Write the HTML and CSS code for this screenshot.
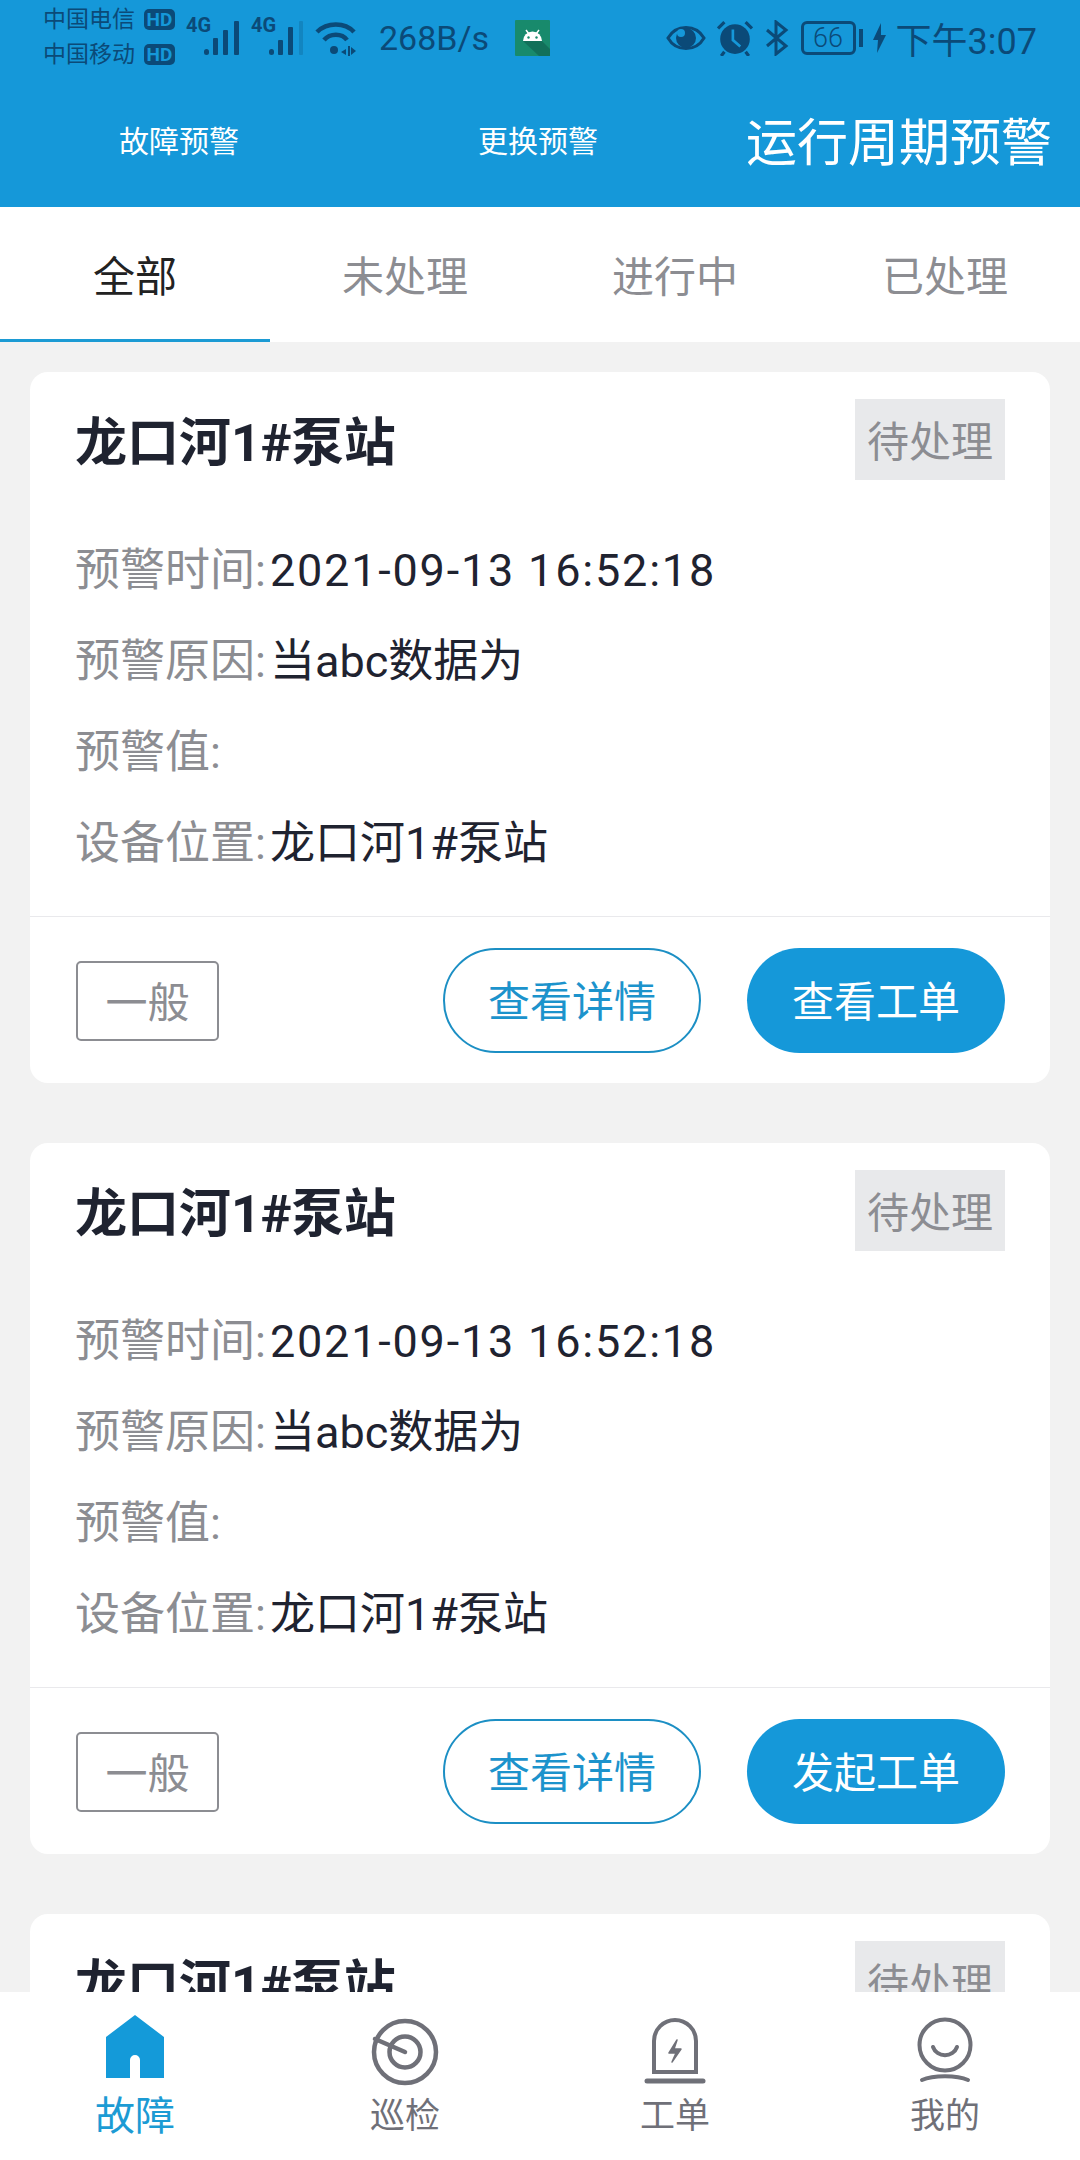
FILE: index.html
```html
<!DOCTYPE html>
<html lang="zh-CN">
<head>
    <meta charset="UTF-8">
    <meta name="viewport" content="width=device-width, initial-scale=1.0">
    <title>运行周期预警</title>
    <link rel="stylesheet" href="styles.css">
</head>
<body>
<div class="app">
    <div class="kop">
        <div class="status">
            <div class="carriers">
                <div class="carrier">中国电信<span class="hd">HD</span></div>
                <div class="carrier">中国移动<span class="hd">HD</span></div>
            </div>
            <span class="net net1">4G</span>
            <svg class="signal" width="36" height="34" viewBox="0 0 36 34">
                <rect x="0" y="28" width="5" height="6" rx="2.5"/>
                <rect x="9" y="17" width="5" height="17" rx="1"/>
                <rect x="19" y="9" width="5" height="25" rx="1"/>
                <rect x="30" y="0" width="5" height="34" rx="1"/>
            </svg>
            <span class="net net2">4G</span>
            <svg class="signal" width="36" height="34" viewBox="0 0 36 34">
                <rect x="0" y="28" width="5" height="6" rx="2.5"/>
                <rect x="9" y="19" width="5" height="15" rx="1"/>
                <rect x="19" y="6" width="5" height="28" rx="1"/>
                <rect x="30" y="0" width="4" height="34" rx="1" opacity=".25"/>
            </svg>
            <svg class="wifi" width="42" height="36" viewBox="0 0 42 36">
                <path d="M2 12 C12 2 30 2 39 12" fill="none" stroke="#0b4a78" stroke-width="4.500"/>
                <path d="M9 20 C15 13 27 13 32 20" fill="none" stroke="#0b4a78" stroke-width="4.500"/>
                <circle cx="19" cy="30" r="4"/>
                <path d="M31 29 l-5 3 5 3z M33 26 h2 v10 h-2z M36 27 l5 4 -5 4z"/>
            </svg>
            <span class="speed">268B/s</span>
            <svg class="android" width="35" height="36" viewBox="0 0 35 36">
                <rect width="35" height="36" rx="1" fill="#188a6c"/>
                <path d="M8 21 L27 21 L35 29 V36 H24z" fill="#12705a"/>
                <path d="M8 21 a9.500 9.500 0 0 1 19 0z" fill="#fff"/>
                <path d="M11 10 l3 4 M24 10 l-3 4" stroke="#fff" stroke-width="1.500"/>
                <circle cx="13.500" cy="17.500" r="1.200" fill="#188a6c"/>
                <circle cx="21.500" cy="17.500" r="1.200" fill="#188a6c"/>
            </svg>
            <div class="status-rechts">
                <svg class="eye" width="40" height="28" viewBox="0 0 40 28">
                    <path d="M2 14 C10 0 30 0 38 14 C30 28 10 28 2 14z" fill="none" stroke="#0b4a78" stroke-width="3"/>
                    <circle cx="20" cy="14" r="10"/>
                    <circle cx="15" cy="9" r="4" fill="#1598d9"/>
                </svg>
                <svg class="alarm" width="36" height="36" viewBox="0 0 34 34">
                    <circle cx="17" cy="18" r="14"/>
                    <path d="M1 8 L7 2 M27 2 L33 8 M7 30 L4 34 M27 30 L30 34" fill="none" stroke="#0b4a78" stroke-width="3"/>
                    <path d="M15 9 V19 L22 25" fill="none" stroke="#1598d9" stroke-width="2.500"/>
                </svg>
                <svg class="bt" width="24" height="36" viewBox="0 0 24 36">
                    <path d="M2 26 L21 10 L11 2 V34 L21 26 L2 10" fill="none" stroke="#0b4a78" stroke-width="3"/>
                </svg>
                <div class="batterij"><span>66</span></div>
                <div class="nub"></div>
                <svg class="bolt" width="15" height="30" viewBox="0 0 15 30">
                    <path d="M9 0 L1 17 H6 L5 30 L14 12 H9z"/>
                </svg>
                <span class="tijd">下午3:07</span>
            </div>
        </div>
        <div class="kop-tabs">
            <div class="kop-tab">故障预警</div>
            <div class="kop-tab">更换预警</div>
            <div class="kop-tab actief">运行周期预警</div>
        </div>
    </div>

    <div class="tabs">
        <div class="tab actief">全部</div>
        <div class="tab">未处理</div>
        <div class="tab">进行中</div>
        <div class="tab">已处理</div>
    </div>

    <div class="lijst">
        <div class="kaart">
            <div class="kaart-kop">
                <div class="naam">龙口河1#泵站</div>
                <div class="badge">待处理</div>
            </div>
            <div class="regels">
                <div class="regel"><span class="label">预警时间:</span><span class="tijdstip">2021-09-13 16:52:18</span></div>
                <div class="regel"><span class="label">预警原因:</span>当abc数据为</div>
                <div class="regel"><span class="label">预警值:</span></div>
                <div class="regel"><span class="label">设备位置:</span>龙口河1#泵站</div>
            </div>
            <div class="kaart-voet">
                <div class="niveau">一般</div>
                <div class="knop lijn">查看详情</div>
                <div class="knop vol">查看工单</div>
            </div>
        </div>
        <div class="kaart">
            <div class="kaart-kop">
                <div class="naam">龙口河1#泵站</div>
                <div class="badge">待处理</div>
            </div>
            <div class="regels">
                <div class="regel"><span class="label">预警时间:</span><span class="tijdstip">2021-09-13 16:52:18</span></div>
                <div class="regel"><span class="label">预警原因:</span>当abc数据为</div>
                <div class="regel"><span class="label">预警值:</span></div>
                <div class="regel"><span class="label">设备位置:</span>龙口河1#泵站</div>
            </div>
            <div class="kaart-voet">
                <div class="niveau">一般</div>
                <div class="knop lijn">查看详情</div>
                <div class="knop vol">发起工单</div>
            </div>
        </div>
        <div class="kaart">
            <div class="kaart-kop">
                <div class="naam">龙口河1#泵站</div>
                <div class="badge">待处理</div>
            </div>
        </div>
    </div>

    <div class="onderkant">
        <div class="item actief">
            <svg width="72" height="72" viewBox="0 0 72 72">
                <path d="M36 1 L65 23 V64 H41 V46 a5 5 0 0 0 -10 0 V64 H7 V23z" fill="#149ad9"/>
            </svg>
            <span>故障</span>
        </div>
        <div class="item">
            <svg width="72" height="72" viewBox="0 0 72 72" fill="none" stroke="#6f7078" stroke-width="4.500">
                <circle cx="36" cy="38" r="31"/>
                <circle cx="36" cy="38" r="15.500"/>
                <path d="M6 25 L36 38" stroke-linecap="round"/>
            </svg>
            <span>巡检</span>
        </div>
        <div class="item">
            <svg width="72" height="72" viewBox="0 0 72 72" fill="none" stroke="#6f7078" stroke-width="4">
                <path d="M15 58 V27 a21 21 0 0 1 42 0 V58z"/>
                <path d="M8 67 H64" stroke-width="5" stroke-linecap="round"/>
                <path d="M38 26 L30 39 H37 L33 48 L42 35 H35z" fill="#6f7078" stroke-width="1.500" stroke-linejoin="round"/>
            </svg>
            <span>工单</span>
        </div>
        <div class="item">
            <svg width="72" height="72" viewBox="0 0 72 72" fill="none" stroke="#6f7078" stroke-width="4" stroke-linecap="round">
                <circle cx="36" cy="31" r="25.500"/>
                <path d="M24 33 C28 44 44 44 48 33"/>
                <path d="M13 66 C24 61 48 61 59 66"/>
            </svg>
            <span>我的</span>
        </div>
    </div>
</div>
</body>
</html>
```

FILE: styles.css
```css
html, body {
    margin: 0;
    padding: 0;
}

body {
    font-family: Roboto, "Noto Sans CJK SC", sans-serif;
    background: #f2f2f2;
}

.app {
    width: 1080px;
    height: 2160px;
    display: flex;
    flex-direction: column;
    overflow: hidden;
}

/* blue header with the phone status bar in it */
.kop {
    background: #1598d9;
    height: 207px;
    flex: none;
}

.status {
    height: 75px;
    display: flex;
    align-items: center;
    padding: 0 43px 0 43px;
    color: #0b4a78;
    fill: #0b4a78;
}

.carriers {
    width: 132px;
    font-size: 23px;
    line-height: 35px;
    margin-top: -1px;
}

.carrier {
    display: flex;
    align-items: center;
    justify-content: space-between;
    white-space: nowrap;
}

.hd {
    background: #0b4a78;
    color: #1598d9;
    font-size: 19px;
    font-weight: 700;
    line-height: 21px;
    width: 31px;
    height: 21px;
    border-radius: 5px;
    text-align: center;
}

.net {
    font-family: "Liberation Sans Narrow", Roboto, sans-serif;
    font-size: 20px;
    font-weight: 700;
    align-self: flex-start;
    margin-top: 13px;
    width: 18px;
}

.net1 {
    margin-left: 11px;
}

.net2 {
    margin-left: 11px;
}

.signal {
    margin-top: 1px;
}

.wifi {
    margin-left: 10px;
}

.speed {
    font-size: 34px;
    margin-left: 22px;
}

.android {
    margin-left: 26px;
}

.status-rechts {
    margin-left: auto;
    display: flex;
    align-items: center;
}

.alarm {
    margin-left: 11px;
}

.bt {
    margin-left: 12px;
}

.batterij {
    margin-left: 12px;
    width: 49px;
    height: 28px;
    border: 3px solid #0b4a78;
    border-radius: 6px;
    font-size: 27px;
    line-height: 28px;
    font-weight: 300;
    text-align: center;
}

.nub {
    width: 4px;
    height: 18px;
    margin-left: 3px;
    background: #0b4a78;
}

.bolt {
    margin-left: 9px;
}

.tijd {
    font-size: 36px;
    margin-left: 9px;
    white-space: nowrap;
}

.kop-tabs {
    height: 127px;
    display: grid;
    grid-template-columns: 358px 360px 362px;
    align-items: center;
    text-align: center;
    color: #fff;
    font-size: 30px;
}

.kop-tab.actief {
    font-size: 51px;
}

/* status tabs */
.tabs {
    background: #fff;
    height: 135px;
    flex: none;
    display: grid;
    grid-template-columns: repeat(4, 1fr);
}

.tab {
    font-size: 42px;
    line-height: 142px;
    text-align: center;
    color: #8c8d92;
}

.tab.actief {
    color: #222;
    border-bottom: 3px solid #1c9bd4;
    height: 132px;
}

/* cards */
.lijst {
    flex: 1;
    min-height: 0;
    overflow: hidden;
    padding: 30px 30px 0;
}

.kaart {
    background: #fff;
    border-radius: 18px;
    margin-bottom: 60px;
}

.kaart-kop {
    display: flex;
    justify-content: space-between;
    padding: 27px 45px 0 45px;
}

.naam {
    font-size: 52px;
    font-weight: 700;
    color: #1f2330;
    line-height: 90px;
}

.badge {
    background: #e8e9eb;
    color: #8c8d92;
    font-size: 42px;
    line-height: 87px;
    height: 81px;
    width: 150px;
    text-align: center;
}

.regels {
    padding: 36px 45px 27px;
}

.regel {
    font-size: 45px;
    line-height: 91px;
    color: #1f2330;
    white-space: nowrap;
}

.label {
    color: #8c8d92;
    margin-right: 4px;
}

.tijdstip {
    letter-spacing: 1.800px;
}

.kaart-voet {
    border-top: 1px solid #e9e9ec;
    display: flex;
    align-items: center;
    gap: 46px;
    padding: 31px 45px 30px 46px;
}

.niveau {
    width: 139px;
    height: 76px;
    margin-right: auto;
    border: 2px solid #8c8d92;
    border-radius: 5px;
    color: #8c8d92;
    font-size: 42px;
    line-height: 82px;
    text-align: center;
}

.knop {
    width: 258px;
    height: 105px;
    box-sizing: border-box;
    border-radius: 53px;
    font-size: 42px;
    line-height: 109px;
    text-align: center;
}

.knop.lijn {
    border: 2px solid #1c8fc4;
    color: #1c93cc;
    line-height: 105px;
}

.knop.vol {
    background: #1598d9;
    color: #fff;
}

/* bottom navigation */
.onderkant {
    background: #fff;
    height: 168px;
    flex: none;
    display: grid;
    grid-template-columns: repeat(4, 1fr);
    position: relative;
}

.item {
    display: flex;
    flex-direction: column;
    align-items: center;
    padding-top: 22px;
    color: #6f7078;
    font-size: 35px;
}

.item svg {
    display: block;
}

.item span {
    line-height: 44px;
    margin-top: 9px;
}

.item.actief {
    color: #1c9bd4;
    font-size: 40px;
}
```
